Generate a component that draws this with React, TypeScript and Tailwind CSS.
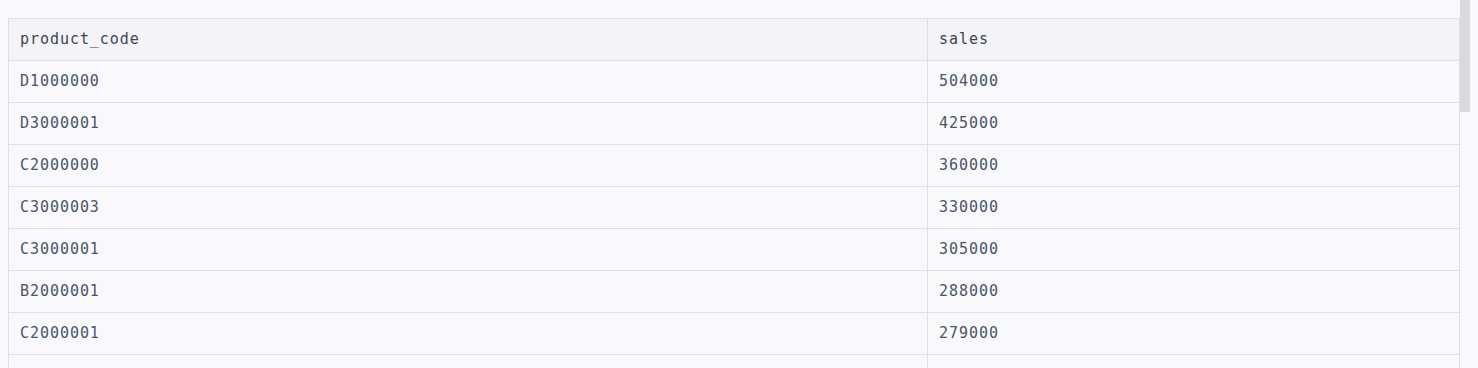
import React from "react";

const rows: [string, string][] = [
  ["D1000000", "504000"],
  ["D3000001", "425000"],
  ["C2000000", "360000"],
  ["C3000003", "330000"],
  ["C3000001", "305000"],
  ["B2000001", "288000"],
  ["C2000001", "279000"],
  ["B1000002", "264000"],
];

export default function App() {
  return (
    <div className="relative h-[368px] w-full overflow-hidden bg-[#f9f9fc]">
      <div className="pl-[8px] pt-[18px] w-[1460px]">
        <table
          className="w-full border-collapse text-[15px] leading-[18px] tracking-[0.95px] text-[#4a5567]"
          style={{ fontFamily: '"DejaVu Sans Mono", monospace' }}
        >
          <thead>
            <tr className="bg-[#f4f4f8] h-[42px]">
              <th className="w-[919px] border border-[#d7e3ec] px-[11px] pb-[2px] text-left font-normal text-[#3d4553]">
                product_code
              </th>
              <th className="border border-[#d7e3ec] px-[11px] pb-[2px] text-left font-normal text-[#3d4553]">
                sales
              </th>
            </tr>
          </thead>
          <tbody>
            {rows.map(([code, sales]) => (
              <tr key={code} className="bg-[#f9f9fc] h-[42px]">
                <td className="border border-[#d7e3ec] px-[11px] pb-[2px]">{code}</td>
                <td className="border border-[#d7e3ec] px-[11px] pb-[2px]">{sales}</td>
              </tr>
            ))}
          </tbody>
        </table>
      </div>
      <div className="absolute left-[1460px] top-0 h-[112px] w-[10px] bg-[#d9d9de]" />
    </div>
  );
}
